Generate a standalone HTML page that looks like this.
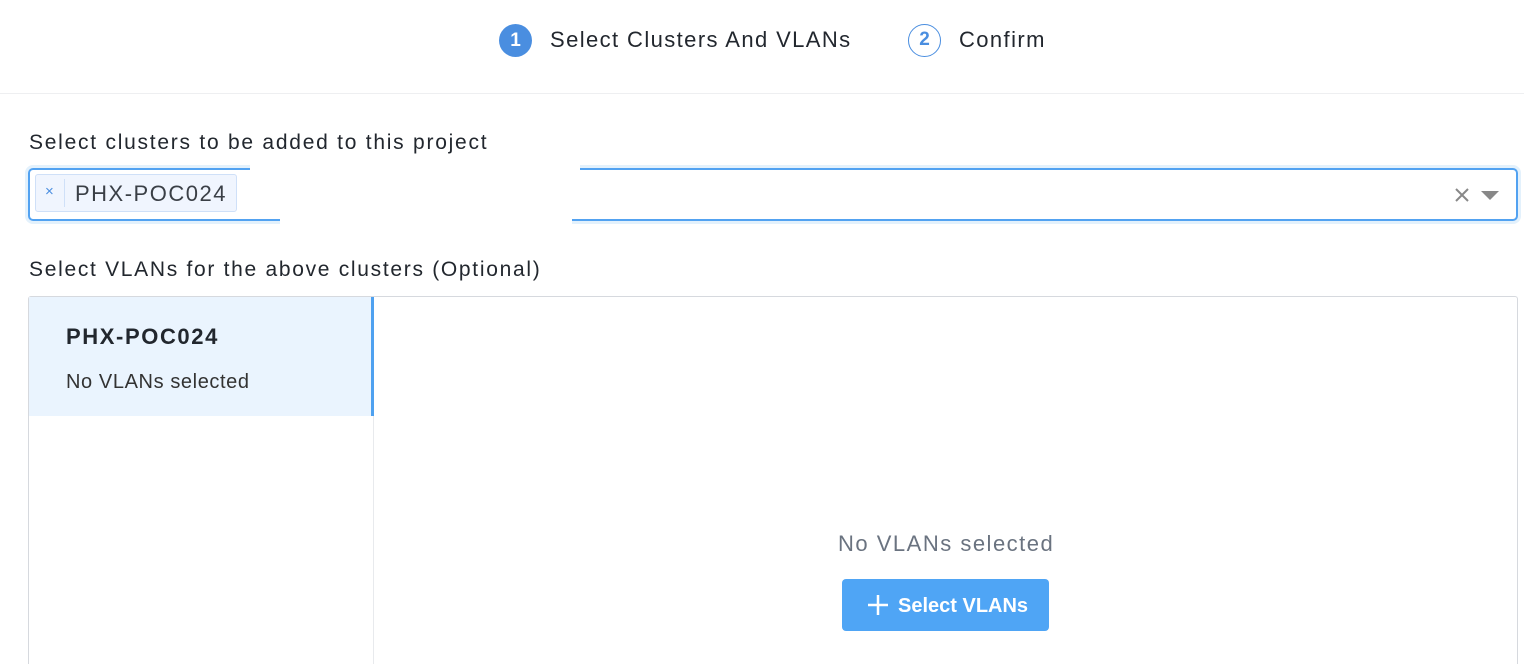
<!DOCTYPE html>
<html><head><style>
*{box-sizing:border-box;margin:0;padding:0}
html,body{width:1524px;height:664px;overflow:hidden}
body{background:#fff;font-family:"Liberation Sans",sans-serif;color:#22272e;position:relative}
.hdr{position:absolute;left:0;top:0;width:1524px;height:94px;border-bottom:1px solid #eeeff1}
.c1{position:absolute;left:499px;top:24px;width:33px;height:33px;border-radius:50%;background:#4a8ee0;color:#fff;font-weight:bold;font-size:19px;text-align:center;line-height:33px}
.c2{position:absolute;left:908px;top:24px;width:33px;height:33px;border-radius:50%;border:1.5px solid #4a8ee0;color:#4a8ee0;font-weight:bold;font-size:19px;text-align:center;line-height:30px}
.t{position:absolute;font-size:22px;color:#22272e;letter-spacing:1.4px}
.lbl{position:absolute;left:29px;font-size:21px;color:#22272e;letter-spacing:1.75px}
.inp{position:absolute;left:28px;top:168px;width:1490px;height:53px;border:2px solid #52a2f1;border-radius:5px;box-shadow:0 0 0 3px #e3f1fc}
.tag{position:absolute;left:35px;top:174px;width:202px;height:38px;background:#f0f5fe;border:1px solid #cfe0f8;border-radius:3px}
.tag .x{position:absolute;left:9px;top:8px;color:#4a8ee0;font-size:15px}
.tag .sep{position:absolute;left:28px;top:4px;width:1px;height:28px;background:#cfe0f8}
.tag .n{position:absolute;left:39px;top:6px;font-size:22px;color:#3a3f46;letter-spacing:1.5px}
.box{position:absolute;left:28px;top:296px;width:1490px;height:368px;border:1px solid #d6d9de;border-bottom:none;border-radius:3px 3px 0 0}
.side{position:absolute;left:29px;top:297px;width:345px;height:367px;border-right:1px solid #e8eaed}
.sel{position:absolute;left:29px;top:297px;width:345px;height:119px;background:#eaf4fe;border-right:3px solid #4ea1f0}
.btn{position:absolute;left:842px;top:579px;width:207px;height:52px;background:#4fa5f5;border-radius:4px;color:#fff;font-weight:bold;font-size:20px}
</style></head><body>
<div class="hdr"></div>
<div class="c1">1</div><div class="t" style="left:550px;top:27px">Select Clusters And VLANs</div>
<div class="c2">2</div><div class="t" style="left:959px;top:27px">Confirm</div>
<div class="lbl" style="top:131px">Select clusters to be added to this project</div>
<div class="inp"></div>
<div style="position:absolute;left:250px;top:164px;width:330px;height:7px;background:#fff"></div>
<div style="position:absolute;left:280px;top:217px;width:292px;height:7px;background:#fff"></div>
<div class="tag"><span class="x">×</span><div class="sep"></div><span class="n">PHX-POC024</span></div>
<svg style="position:absolute;left:1455px;top:188px" width="14" height="14"><path d="M1 1L13 13M13 1L1 13" stroke="#888" stroke-width="2"/></svg>
<svg style="position:absolute;left:1481px;top:191px" width="18" height="10"><path d="M0 0H18L9 9Z" fill="#888"/></svg>
<div class="lbl" style="top:258px;letter-spacing:1.7px">Select VLANs for the above clusters (Optional)</div>
<div class="box"></div>
<div class="side"></div>
<div class="sel"></div>
<div style="position:absolute;left:66px;top:324px;font-size:22px;font-weight:bold;color:#22272e;letter-spacing:1.6px">PHX-POC024</div>
<div style="position:absolute;left:66px;top:371px;font-size:20px;color:#333;letter-spacing:0.6px">No VLANs selected</div>
<div style="position:absolute;left:838px;top:531px;font-size:22px;color:#6a7380;letter-spacing:1.5px">No VLANs selected</div>
<div class="btn"><svg style="position:absolute;left:25px;top:15px" width="22" height="22"><path d="M11 1V21M1 11H21" stroke="#fff" stroke-width="2.5"/></svg><span style="position:absolute;left:56px;top:16px">Select VLANs</span></div>
</body></html>
